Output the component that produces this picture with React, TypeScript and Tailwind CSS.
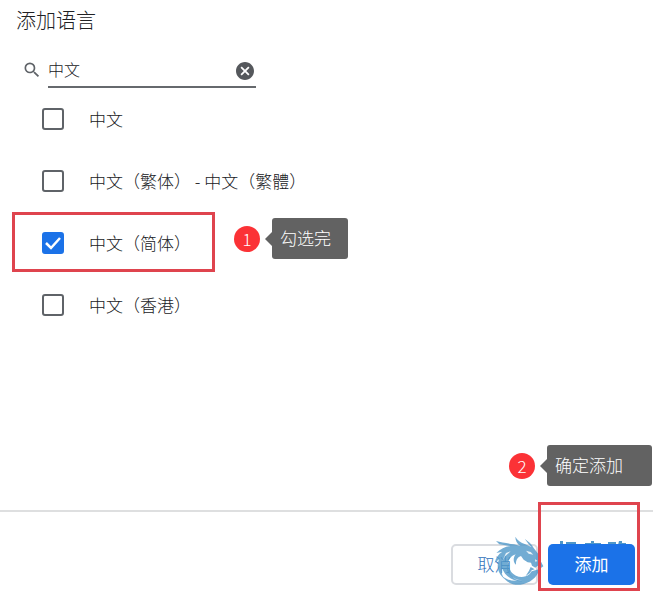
import { useState } from "react";

const languages = ["中文", "中文（繁体） - 中文（繁體）", "中文（简体）", "中文（香港）"];

function SearchIcon() {
  return (
    <svg viewBox="0 0 24 24" className="size-5 fill-[#5f6368]" aria-hidden="true">
      <path d="M15.5 14h-.79l-.28-.27A6.47 6.47 0 0 0 16 9.5 6.5 6.5 0 1 0 9.5 16c1.61 0 3.09-.59 4.23-1.57l.27.28v.79l5 4.99L20.49 19l-4.99-5zm-6 0C7.01 14 5 11.99 5 9.5S7.01 5 9.5 5 14 7.01 14 9.5 11.99 14 9.5 14z" />
    </svg>
  );
}

function ClearIcon() {
  return (
    <svg viewBox="2 2 20 20" className="size-[18px] fill-[#55585c]" aria-hidden="true">
      <path d="M12 2C6.47 2 2 6.47 2 12s4.47 10 10 10 10-4.47 10-10S17.53 2 12 2zm5 13.59L15.59 17 12 13.41 8.41 17 7 15.59 10.59 12 7 8.41 8.41 7 12 10.59 15.59 7 17 8.41 13.41 12 17 15.59z" />
    </svg>
  );
}

function DragonLogo() {
  return (
    <svg viewBox="0 0 180 168" className="pointer-events-none absolute -top-3 left-[39px] h-[56px] w-[60px]" aria-hidden="true">
      <g fill="#4f97c8" fillOpacity="0.8">
        <path d="M76 14C82 25 92 31 106 37L124 45L115 35L104 20C113 27 126 36 131 48L145 66L149 81L160 103L154 107L143 101L136 107L126 101L123 92L113 91L101 83L93 72C83 75 77 85 78 98C69 92 69 77 77 67C60 72 50 89 54 111C59 133 77 145 98 148C69 150 44 132 36 107C33 117 35 129 43 140C23 124 19 102 27 82L14 93C17 78 25 66 37 59L19 63C32 50 45 44 61 42L28 37L18 27C34 31 51 34 72 37L91 42C81 35 76 26 76 14Z" />
        <path d="M59 87C54 108 62 123 78 131C91 137 106 136 118 127L109 143C88 149 65 140 54 121C48 108 50 96 59 87ZM125 118L149 111C141 137 120 154 91 158C68 160 48 150 37 133C62 153 104 153 125 118ZM122 105L134 112L125 115L119 124L107 132L117 116Z" />
      </g>
      <path d="M108 56L122 60L130 68L116 65ZM135 82L143 87L136 89ZM48 63L62 58L45 73L35 91Z" fill="#fff" fillOpacity="0.85" />
    </svg>
  );
}

function Callout({ step, text, wide = false }: { step: number; text: string; wide?: boolean }) {
  return (
    <div className="flex items-center text-[17px] font-normal text-white">
      <span className="flex size-[26px] items-center justify-center rounded-full bg-[#fb3236] leading-none font-light">{step}</span>
      <span className="ml-[5px] border-y-[7px] border-r-[7px] border-y-transparent border-r-[#626262]" />
      <span className={`flex h-[41px] items-center rounded-[3px] bg-[#626262] pb-[2px] pl-2 font-light ${wide ? "w-[105px]" : "w-[76px]"}`}>{text}</span>
    </div>
  );
}

export default function App() {
  const [query, setQuery] = useState("中文");
  const [selected, setSelected] = useState<string[]>([languages[2]]);
  const toggle = (name: string) =>
    setSelected((old) => (old.includes(name) ? old.filter((item) => item !== name) : [...old, name]));

  return (
    <main className="flex min-h-screen flex-col overflow-hidden bg-white font-['Noto_Sans_CJK_SC',sans-serif] font-light text-[#202124]">
      <h1 className="px-4 pt-[6px] text-[20px] leading-[28px]">添加语言</h1>
      <div className="mt-[18px] flex items-center pl-[22px]">
        <label htmlFor="search" aria-label="搜索语言"><SearchIcon /></label>
        <div className="ml-[6px] flex h-9 w-[208px] items-center border-b-2 border-[#66696d] pr-[2px]">
          <input id="search" value={query} onChange={(e) => setQuery(e.target.value)} className="min-w-0 flex-1 text-[16px] outline-none" />
          <button type="button" aria-label="清除" onClick={() => setQuery("")} className="pt-[3px]"><ClearIcon /></button>
        </div>
      </div>
      <ul className="flex-1">
        {languages.map((name, index) => (
          <li key={name} className="relative flex h-[62px] items-center pl-[42px]">
            <label className="flex items-center text-[17px]">
              <span className="grid size-[22px]">
                <input type="checkbox" checked={selected.includes(name)} onChange={() => toggle(name)}
                  className="peer col-start-1 row-start-1 size-full appearance-none rounded-[3px] border-2 border-[#5f6368] checked:border-[#1b72e8] checked:bg-[#1b72e8]" />
                <svg viewBox="0 0 22 22" className="pointer-events-none invisible col-start-1 row-start-1 peer-checked:visible" aria-hidden="true">
                  <path d="M4 11l5 5L18 6" fill="none" stroke="#fff" strokeWidth="2.5" />
                </svg>
              </span>
              <span className="ml-[25px] whitespace-pre">{name}</span>
            </label>
            {index === 2 && (
              <>
                <div className="pointer-events-none absolute top-0 left-3 h-[60px] w-[203px] border-3 border-[#df444e]" />
                <div className="absolute top-[6px] left-[234px]"><Callout step={1} text="勾选完" /></div>
              </>
            )}
          </li>
        ))}
      </ul>
      <footer className="relative flex justify-end gap-[10px] border-t-2 border-[#dedfe0] pt-8 pr-[18px] pb-[15px] text-[17px]">
        <div className="absolute right-[1px] bottom-full mb-[26px]"><Callout step={2} text="确定添加" wide /></div>
        <div className="relative">
          <button type="button" className="h-[41px] w-[87px] rounded-[5px] border-2 border-[#dadce0] pb-[2px] text-[#2f6fba]">取消</button>
          <DragonLogo />
        </div>
        <div className="relative">
          <svg viewBox="0 0 68 4" className="absolute -top-[3px] left-[10px] h-1 w-[68px]" aria-hidden="true">
            <path d="M2 0h3v4H2zM8 1h10v2H8zM33 0h3v4h-3zM27 2h16v2H27zM50 1h8v3h-8zM61 0h3v2h4v2h-8z" fill="#4f97c8" />
          </svg>
          <button type="button" className="relative h-[41px] w-[87px] rounded-[5px] bg-[#1b72e8] pb-[2px] font-normal text-white">添加</button>
          <div className="pointer-events-none absolute -top-[42px] -left-[10px] h-[89px] w-[102px] border-3 border-[#df444e]" />
        </div>
      </footer>
    </main>
  );
}
